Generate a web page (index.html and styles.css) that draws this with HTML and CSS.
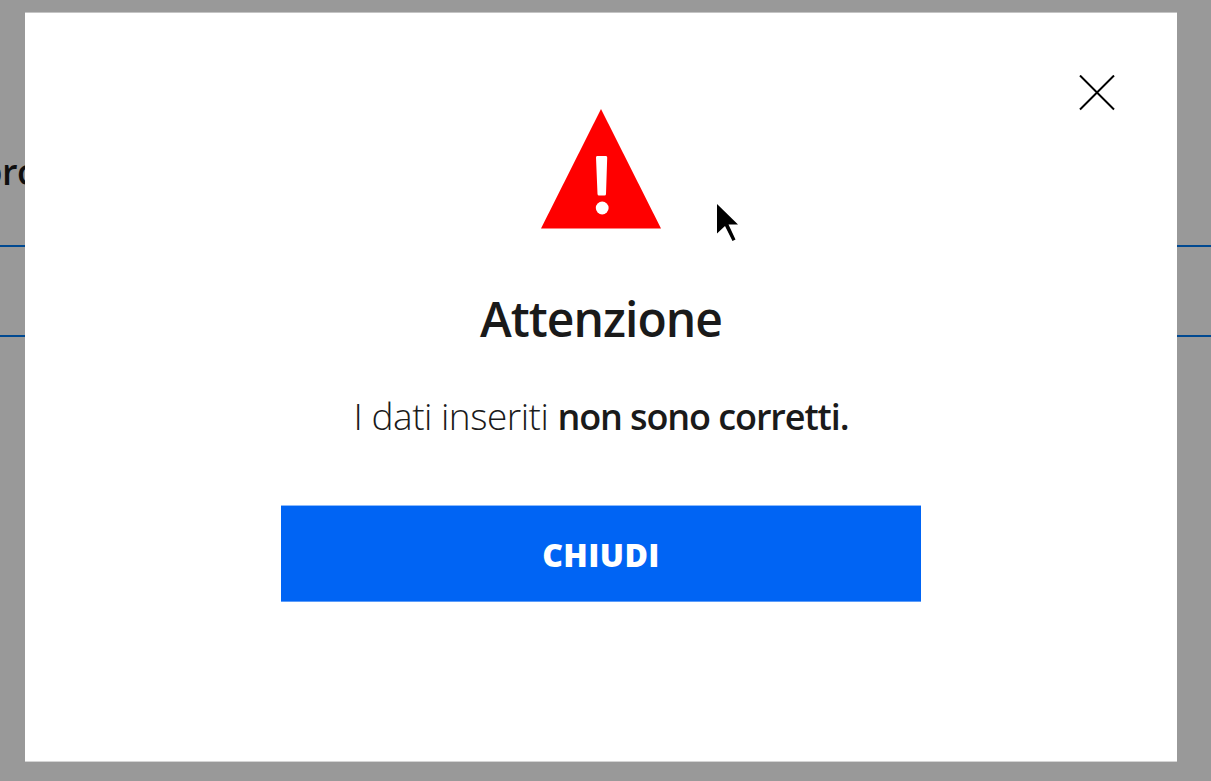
FILE: index.html
```
<!DOCTYPE html>
<html lang="it">
<head>
  <meta charset="UTF-8" />
  <title>Attenzione</title>
  <meta name="viewport" content="width=device-width, initial-scale=1.0">
  <link rel="stylesheet" href="styles.css">
</head>
<body>
  <main class="page">
    <div class="page-label">pro</div>
    <div class="page-field"></div>
  </main>

  <div class="overlay">
    <div class="modal" role="dialog" aria-labelledby="modalTitle">
      <button class="close" aria-label="Chiudi">
        <svg width="36" height="36" viewBox="0 0 36 36">
          <path d="M1 0.5L35 34.5M35 0.5L1 34.5" fill="none" stroke="#000" stroke-width="2" />
        </svg>
      </button>

      <svg class="warning" width="120" height="120" viewBox="0 0 120 120">
        <path d="M60 0L120 119.5H0Z" fill="#f00" />
        <path d="M56 47H65Q66.3 47 66.2 48.5L65 85Q65 86.5 63.5 86.5H58Q56.6 86.5 56.5 85L55 48.5Q55 47 56 47Z" fill="#fff" />
        <circle cx="61.2" cy="99" r="6.4" fill="#fff" />
      </svg>

      <h1 class="title" id="modalTitle">Attenzione</h1>
      <p class="message"><span class="light">I dati inseriti </span><strong>non sono corretti.</strong></p>
      <button class="btn">CHIUDI</button>
    </div>
  </div>

  <svg class="cursor" width="22" height="38" viewBox="0 0 22 38">
    <path d="M0 0L21 20.5H11.5L18.5 35.5L15.5 37L8 22L0 29.5Z" fill="#000" />
  </svg>
</body>
</html>
```

FILE: styles.css
```
body {
  font-family: "Open Sans", "Noto Sans", sans-serif;
  background-color: #fff;
  margin: 0;
  color: #1a1a1a;
  height: 781px;
  overflow: hidden;
}

.page-label {
  margin: 148px 0 0 -20px;
  height: 97px;
  font-size: 36px;
  line-height: 48px;
  font-weight: 600;
  letter-spacing: -0.5px;
}

.page-field {
  height: 88px;
  border-top: 2px solid #007bf2;
  border-bottom: 2px solid #007bf2;
}

.overlay {
  position: fixed;
  inset: 0;
  background: rgba(0, 0, 0, 0.4);
}

.modal {
  box-sizing: border-box;
  width: 1152px;
  height: 750px;
  margin: 12px 0 0 25px;
  padding-top: 62px;
  background: #fff;
  border-top: 1px solid #c4c4c4;
  border-bottom: 1px solid #d4d4d4;
  display: flex;
  flex-direction: column;
  align-items: center;
}

button {
  border: 0;
  padding: 0;
  font-family: inherit;
}

.close {
  align-self: flex-end;
  margin-right: 62px;
  width: 36px;
  height: 36px;
  background: none;
}

.close svg,
.warning {
  display: block;
}

.warning {
  margin-top: -2px;
}

.title {
  margin: 56px 0 0;
  font-size: 48px;
  line-height: 68px;
  font-weight: 600;
  letter-spacing: -0.95px;
}

.message {
  margin: 37px 0 0;
  font-size: 37px;
  line-height: 52px;
  white-space: pre;
}

.light {
  font-weight: 300;
  letter-spacing: -0.5px;
}

.message strong {
  font-weight: 600;
  font-size: 36px;
  letter-spacing: -1.1px;
}

.btn {
  box-sizing: border-box;
  margin-top: 62px;
  width: 640px;
  height: 97px;
  padding-top: 1px;
  background: #0064f4;
  border-top: 1px solid #8cbafb;
  border-bottom: 1px solid #5c9cf9;
  color: #fff;
  font-size: 32px;
  font-weight: 800;
  letter-spacing: 0.4px;
}

.cursor {
  position: fixed;
  left: 717px;
  top: 204px;
}
```
